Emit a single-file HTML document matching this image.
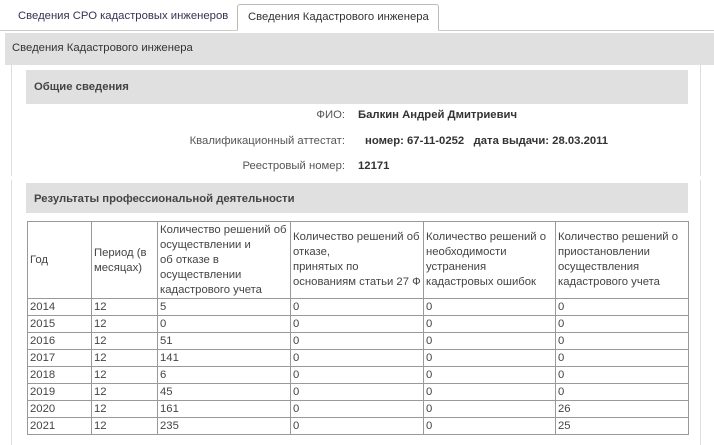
<!DOCTYPE html>
<html><head><meta charset="utf-8"><style>
body{margin:0;width:714px;height:445px;overflow:hidden;background:#fff;font-family:"Liberation Sans",Arial,sans-serif;color:#333;position:relative;font-size:11.3px}
.a{position:absolute;white-space:nowrap}
.tab{position:absolute;top:4px;height:26px;font-size:11.3px;line-height:24px;padding:0 10px;box-sizing:border-box;white-space:nowrap}
table{position:absolute;left:27px;top:221px;border-collapse:collapse;font-size:11.3px;color:#444;table-layout:fixed;width:661px}
td{border:1px solid #999;padding:1px 2px 0;vertical-align:top;height:16.7px;line-height:15px;background:#fff;white-space:nowrap;overflow:hidden;box-sizing:border-box}
tr.h td{height:76px;vertical-align:middle;line-height:15px}
</style></head><body>
<div class="a" style="left:0;top:30px;width:714px;height:1px;background:#ccc"></div>
<div class="tab" style="left:8px;color:#335">Сведения СРО кадастровых инженеров</div>
<div class="tab" style="left:237px;width:202px;border:1px solid #bbb;border-bottom:1px solid #fff;border-radius:3px 3px 0 0;background:#fff;height:27px">Сведения Кадастрового инженера</div>
<div class="a" style="left:5px;top:33px;width:709px;height:32px;background:#e0e0e0"></div>
<div class="a" style="left:12px;top:42px;color:#333">Сведения Кадастрового инженера</div>
<div class="a" style="left:11px;top:65px;width:1px;height:380px;background:#ddd"></div>
<div class="a" style="left:700px;top:65px;width:1px;height:380px;background:#ddd"></div>
<div class="a" style="left:10px;top:176px;width:704px;height:4px;background:#fff"></div>
<div class="a" style="left:26px;top:70px;width:662px;height:34px;background:#e0e0e0"></div>
<div class="a" style="left:34px;top:81px;font-weight:bold;color:#444">Общие сведения</div>
<div class="a" style="right:369px;top:109px;color:#555">ФИО:</div>
<div class="a" style="left:358px;top:109px;font-weight:bold">Балкин Андрей Дмитриевич</div>
<div class="a" style="right:369px;top:135px;color:#555">Квалификационный аттестат:</div>
<div class="a" style="left:365px;top:135px;font-weight:bold">номер: 67-11-0252 &nbsp; дата выдачи: 28.03.2011</div>
<div class="a" style="right:369px;top:160px;color:#555">Реестровый номер:</div>
<div class="a" style="left:358px;top:160px;font-weight:bold">12171</div>
<div class="a" style="left:26px;top:183px;width:662px;height:30px;background:#e0e0e0"></div>
<div class="a" style="left:34px;top:193px;font-weight:bold;color:#444">Результаты профессиональной деятельности</div>
<table>
<colgroup><col style="width:64px"><col style="width:66px"><col style="width:133px"><col style="width:133px"><col style="width:132px"><col style="width:133px"></colgroup>
<tr class="h"><td>Год</td><td>Период (в<br>месяцах)</td><td>Количество решений об<br>осуществлении и<br>об отказе в<br>осуществлении<br>кадастрового учета</td><td style="vertical-align:top;padding-top:8px">Количество решений об<br>отказе,<br>принятых по<br>основаниям статьи 27 Ф</td><td style="vertical-align:top;padding-top:8px">Количество решений о<br>необходимости<br>устранения<br>кадастровых ошибок</td><td style="vertical-align:top;padding-top:8px">Количество решений о<br>приостановлении<br>осуществления<br>кадастрового учета</td></tr>
<tr><td>2014</td><td>12</td><td>5</td><td>0</td><td>0</td><td>0</td></tr>
<tr><td>2015</td><td>12</td><td>0</td><td>0</td><td>0</td><td>0</td></tr>
<tr><td>2016</td><td>12</td><td>51</td><td>0</td><td>0</td><td>0</td></tr>
<tr><td>2017</td><td>12</td><td>141</td><td>0</td><td>0</td><td>0</td></tr>
<tr><td>2018</td><td>12</td><td>6</td><td>0</td><td>0</td><td>0</td></tr>
<tr><td>2019</td><td>12</td><td>45</td><td>0</td><td>0</td><td>0</td></tr>
<tr><td>2020</td><td>12</td><td>161</td><td>0</td><td>0</td><td>26</td></tr>
<tr><td>2021</td><td>12</td><td>235</td><td>0</td><td>0</td><td>25</td></tr>
</table>
</body></html>
